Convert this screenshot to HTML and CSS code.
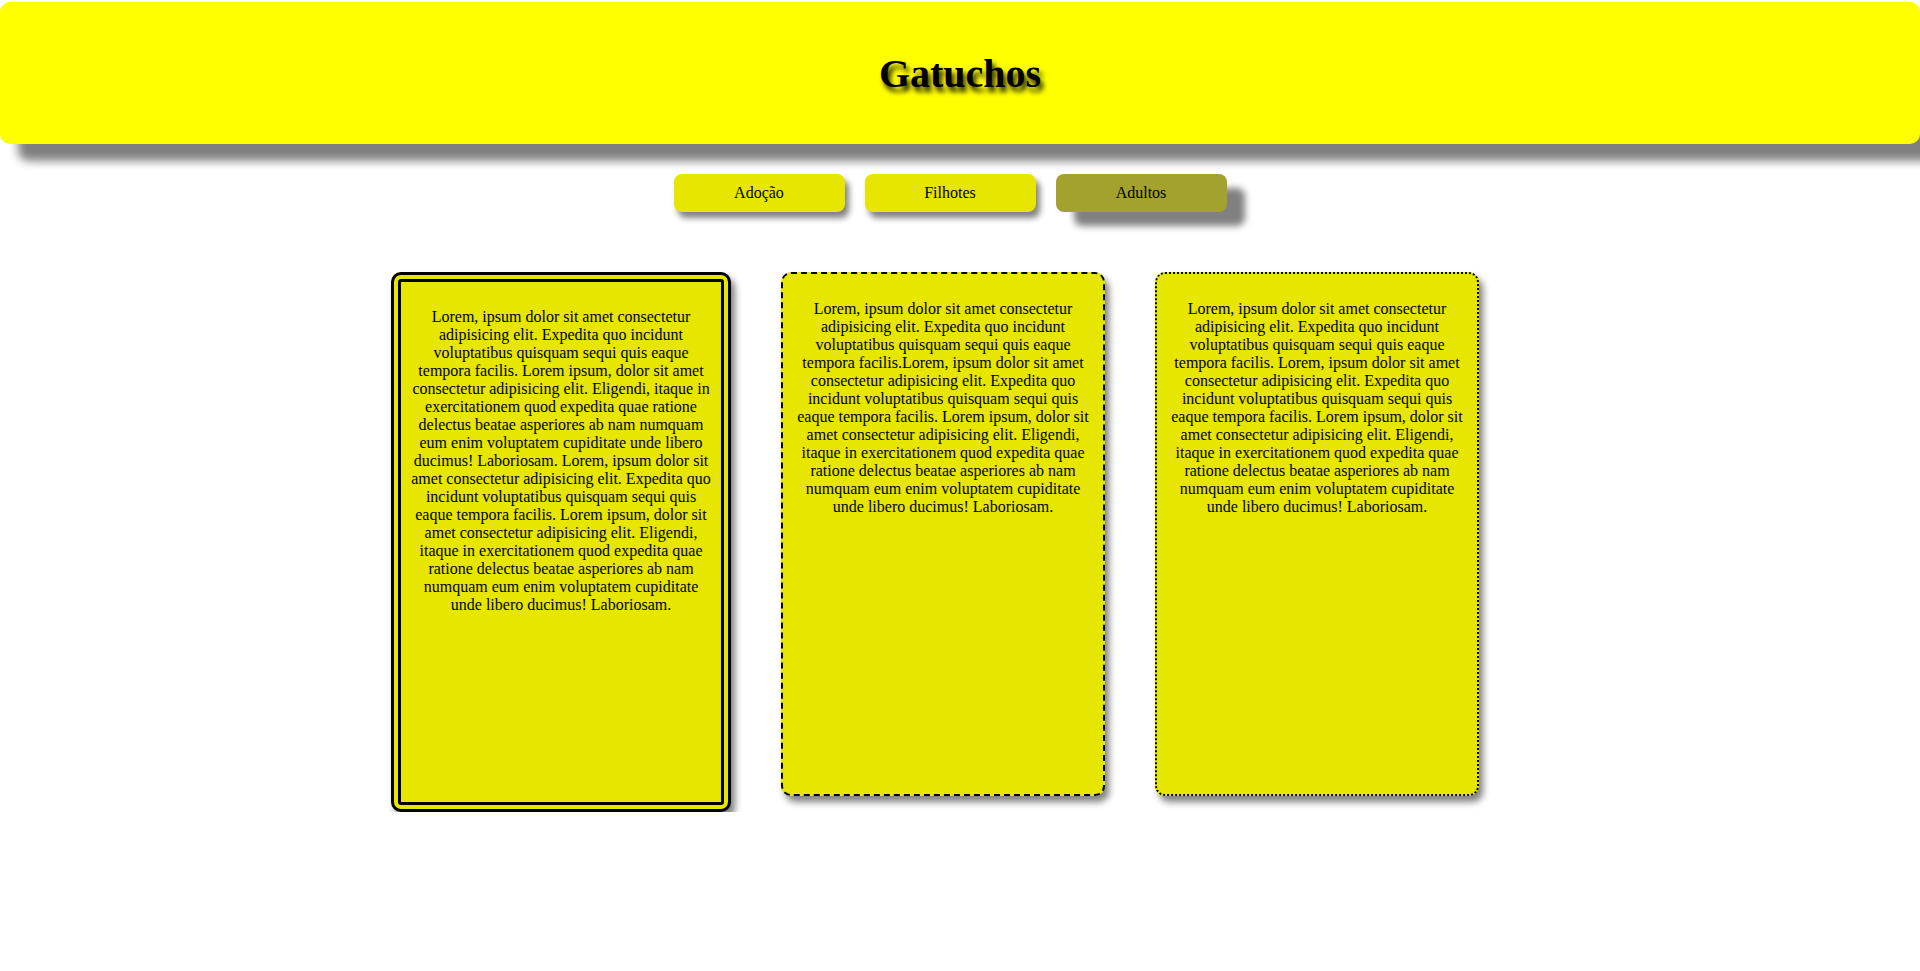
FILE: index.html
```html
<!DOCTYPE html>
<html lang="pt-BR">
<head>
    <meta charset="UTF-8">
    <meta name="viewport" content="width=device-width, initial-scale=1.0">
    <title>Gatuchos</title>
    <link rel="stylesheet" href="styles.css">
</head>
<body>
    <!-- Cabeçalho -->
    <header class="topo">
        <h1>Gatuchos</h1>
    </header>

    <!-- Menu -->
    <nav class="menu">
        <a href="#" class="botao">Adoção</a>
        <a href="#" class="botao">Filhotes</a>
        <a href="#" class="botao ativo">Adultos</a>
    </nav>

    <!-- Cards -->
    <main class="cards">
        <div class="card card-duplo">
            <p>Lorem, ipsum dolor sit amet consectetur adipisicing elit. Expedita quo incidunt voluptatibus quisquam sequi quis eaque tempora facilis. Lorem ipsum, dolor sit amet consectetur adipisicing elit. Eligendi, itaque in exercitationem quod expedita quae ratione delectus beatae asperiores ab nam numquam eum enim voluptatem cupiditate unde libero ducimus! Laboriosam. Lorem, ipsum dolor sit amet consectetur adipisicing elit. Expedita quo incidunt voluptatibus quisquam sequi quis eaque tempora facilis. Lorem ipsum, dolor sit amet consectetur adipisicing elit. Eligendi, itaque in exercitationem quod expedita quae ratione delectus beatae asperiores ab nam numquam eum enim voluptatem cupiditate unde libero ducimus! Laboriosam.</p>
        </div>
        <div class="card card-tracejado">
            <p>Lorem, ipsum dolor sit amet consectetur adipisicing elit. Expedita quo incidunt voluptatibus quisquam sequi quis eaque tempora facilis.Lorem, ipsum dolor sit amet consectetur adipisicing elit. Expedita quo incidunt voluptatibus quisquam sequi quis eaque tempora facilis. Lorem ipsum, dolor sit amet consectetur adipisicing elit. Eligendi, itaque in exercitationem quod expedita quae ratione delectus beatae asperiores ab nam numquam eum enim voluptatem cupiditate unde libero ducimus! Laboriosam.</p>
        </div>
        <div class="card card-pontilhado">
            <p>Lorem, ipsum dolor sit amet consectetur adipisicing elit. Expedita quo incidunt voluptatibus quisquam sequi quis eaque tempora facilis. Lorem, ipsum dolor sit amet consectetur adipisicing elit. Expedita quo incidunt voluptatibus quisquam sequi quis eaque tempora facilis. Lorem ipsum, dolor sit amet consectetur adipisicing elit. Eligendi, itaque in exercitationem quod expedita quae ratione delectus beatae asperiores ab nam numquam eum enim voluptatem cupiditate unde libero ducimus! Laboriosam.</p>
        </div>
    </main>
</body>
</html>
```

FILE: styles.css
```css
body {
    margin: 0;
    font-family: "Liberation Serif", "Times New Roman", serif;
    font-size: 16px;
    color: #000;
    background-color: #fff;
}

.topo {
    margin-top: 2px;
    height: 142px;
    background-color: #ffff00;
    border-radius: 10px;
    box-shadow: 18px 17px 10px gray;
    display: flex;
    align-items: center;
    justify-content: center;
}

.topo h1 {
    margin: 0;
    font-size: 40px;
    font-weight: bold;
    text-shadow: 3px 5px 5px rgba(0, 0, 0, 0.85);
}

.menu {
    display: flex;
    justify-content: center;
    gap: 20px;
    margin-top: 30px;
    padding-right: 20px;
}

.botao {
    width: 171px;
    height: 38px;
    display: flex;
    align-items: center;
    justify-content: center;
    background-color: #e6e600;
    color: #000;
    text-decoration: none;
    border-radius: 8px;
    box-shadow: 4px 6px 6px gray;
}

.botao.ativo {
    background-color: #a4a22f;
    box-shadow: 18px 14px 7px gray;
}

.cards {
    display: flex;
    justify-content: center;
    align-items: flex-start;
    margin-top: 60px;
}

.card {
    width: 300px;
    height: 500px;
    padding: 10px;
    margin-right: 50px;
    background-color: #e6e600;
    border-radius: 10px;
    box-shadow: 4px 6px 7px gray;
    text-align: center;
}

.card-duplo {
    border: 10px double #000;
}

.card-tracejado {
    border: 2px dashed #000;
}

.card-pontilhado {
    border: 2px dotted #000;
}
```
